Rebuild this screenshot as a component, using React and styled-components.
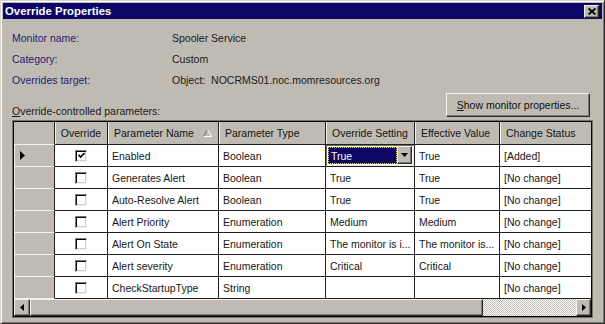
import React from 'react';
import styled, { createGlobalStyle } from 'styled-components';

const FACE = '#bfbbb3';
const NAVY = '#0c0666';
const LINE = '#1f1f1f';
const FONT = `"Liberation Sans", Arial, Helvetica, sans-serif`;

const Global = createGlobalStyle`
  html, body { margin: 0; padding: 0; background: ${FACE}; }
  body { font-family: ${FONT}; font-size: 10.5px; overflow: hidden; color: #161616; }
  * { box-sizing: border-box; }
`;

const Dialog = styled.div`
  width: 605px;
  height: 324px;
  background: ${FACE};
  border: 1px solid;
  border-color: #d8d4cc #2e2e2e #2e2e2e #d8d4cc;
  box-shadow: inset 1px 1px 0 #ffffff, inset -1px -1px 0 #7a766f;
  padding: 2px;
  display: flex;
  flex-direction: column;
`;

const TitleBar = styled.div`
  height: 16px;
  background: ${NAVY};
  display: flex;
  align-items: center;
  justify-content: space-between;
  padding: 0 3px 0 2px;
`;

const Title = styled.span`
  color: #fff;
  font-weight: bold;
  font-size: 11.3px;
  letter-spacing: 0.05px;
`;

const RaisedBtn = styled.div`
  background: ${FACE};
  border: 1px solid;
  border-color: #f4f2ee #2a2a2a #2a2a2a #f4f2ee;
  box-shadow: inset -1px -1px 0 #7e7a73;
  display: flex;
  align-items: center;
  justify-content: center;
`;

const CloseBtn = styled(RaisedBtn)`
  width: 15px;
  height: 13px;
`;

const Content = styled.div`
  flex: 1;
  display: flex;
  flex-direction: column;
  padding: 8px 9px 0 9px;
`;

const Info = styled.div`
  display: grid;
  grid-template-columns: 160px 1fr;
  grid-auto-rows: 21px;
  align-items: center;
`;

const Label = styled.span`
  color: #1d1d78;
`;

const Value = styled.span`
  color: #1a1a1a;
  white-space: pre;
`;

const ParamBar = styled.div`
  margin-top: 3px;
  display: flex;
  justify-content: space-between;
  align-items: flex-end;
`;

const ParamLabel = styled.span`
  line-height: 14px;
  margin-bottom: -1px;
  color: #1a1a1a;
`;

const PushButton = styled(RaisedBtn)`
  width: 144px;
  height: 24px;
  margin-right: 3px;
  color: #111;
`;

const U = styled.span`
  text-decoration: underline;
`;

const GridFrame = styled.div`
  margin-top: 3px;
  height: 198px;
  border: 1px solid #77736c;
  box-shadow: inset 0 0 0 1px #060606;
  padding: 1px;
  display: flex;
  flex-direction: column;
`;

const TableArea = styled.div`
  flex: 1;
  overflow: hidden;
  background: ${FACE};
`;

const Row = styled.div`
  display: grid;
  grid-template-columns: 41px 53px 111px 107px 89px 85px 120px;
  height: ${p => p.$h}px;
`;

const HeadCell = styled.div`
  background: ${FACE};
  border-right: 1px solid ${LINE};
  border-bottom: 1px solid ${LINE};
  box-shadow: inset 1px 0 0 #f4f2ee;
  display: flex;
  align-items: center;
  justify-content: ${p => (p.$center ? 'center' : 'space-between')};
  padding: ${p => (p.$center ? '0' : '0 6px 0 6px')};
  white-space: nowrap;
  overflow: hidden;
  color: #141414;
`;

const Corner = styled.div`
  background: ${FACE};
  border-right: 1px solid ${LINE};
  border-bottom: 1px solid #f4f2ee;
`;

const RowHead = styled.div`
  background: ${FACE};
  border-right: 1px solid ${LINE};
  border-bottom: 1px solid #f4f2ee;
  box-shadow: inset 1px 0 0 #f4f2ee;
  display: flex;
  align-items: center;
  padding-left: 6px;
`;

const Cell = styled.div`
  background: #fff;
  border-right: 1px solid ${LINE};
  border-bottom: 1px solid ${LINE};
  display: flex;
  align-items: center;
  justify-content: ${p => (p.$center ? 'center' : 'flex-start')};
  padding-left: ${p => (p.$center ? '0' : '4px')};
  white-space: nowrap;
  overflow: hidden;
  color: #161616;
`;

const Check = styled.span`
  width: 12px;
  height: 12px;
  background: #fff;
  border: 1px solid;
  border-color: #7e7a73 #f4f2ee #f4f2ee #7e7a73;
  box-shadow: inset 1px 1px 0 #0a0a0a, inset -1px -1px 0 #d4d0c8;
  display: flex;
  align-items: center;
  justify-content: center;
`;

const ComboCell = styled.div`
  background: #fff;
  border-right: 1px solid ${LINE};
  border-bottom: 1px solid ${LINE};
  display: flex;
`;

const Combo = styled.div`
  flex: 1;
  display: flex;
  border: 1px solid;
  border-color: #6f6b65 #ece9e3 #ece9e3 #6f6b65;
  padding: 1px;
`;

const ComboEdit = styled.div`
  flex: 1;
  background: ${NAVY};
  border: 1px dotted #f2dc3a;
  color: #fff;
  display: flex;
  align-items: center;
  padding-left: 2px;
`;

const ComboBtn = styled(RaisedBtn)`
  width: 15px;
  margin-top: -1px;
`;

const ScrollBar = styled.div`
  height: 17px;
  display: flex;
`;

const ScrollBtn = styled(RaisedBtn)`
  width: ${p => p.$w}px;
`;

const Thumb = styled(RaisedBtn)`
  width: 453px;
`;

const Track = styled.div`
  flex: 1;
  background: repeating-conic-gradient(#ffffff 0 25%, ${FACE} 0 50%) 0 0 / 2px 2px;
`;

const Svg = styled.svg`
  display: block;
  overflow: visible;
`;

const CloseX = () => (
  <Svg width="8" height="7" viewBox="0 0 8 7">
    <path d="M0.5 0.5 L7.5 6.5 M7.5 0.5 L0.5 6.5" stroke="#000" strokeWidth="1.7" />
  </Svg>
);

const CheckMark = () => (
  <Svg width="7" height="7" viewBox="0 0 7 7">
    <path d="M0.5 2.8 L2.6 5 L6.6 1" stroke="#000" strokeWidth="1.6" fill="none" />
  </Svg>
);

const SortUp = () => (
  <Svg width="9" height="8" viewBox="0 0 9 8">
    <path d="M4.5 0.5 L0.5 7.5" stroke="#6e6a63" strokeWidth="1" />
    <path d="M4.5 0.5 L8.5 7.5 L0.5 7.5" stroke="#ffffff" strokeWidth="1" fill="none" />
  </Svg>
);

const RowArrow = () => (
  <Svg width="5" height="9" viewBox="0 0 5 9">
    <path d="M0 0 L5 4.5 L0 9 Z" fill="#000" />
  </Svg>
);

const DownArrow = () => (
  <Svg width="7" height="4" viewBox="0 0 7 4">
    <path d="M0 0 L7 0 L3.5 4 Z" fill="#000" />
  </Svg>
);

const LeftArrow = () => (
  <Svg width="4" height="7" viewBox="0 0 4 7">
    <path d="M4 0 L4 7 L0 3.5 Z" fill="#000" />
  </Svg>
);

const RightArrow = () => (
  <Svg width="4" height="7" viewBox="0 0 4 7">
    <path d="M0 0 L0 7 L4 3.5 Z" fill="#000" />
  </Svg>
);

const rows = [
  { checked: true, name: 'Enabled', type: 'Boolean', setting: 'True', effective: 'True', status: '[Added]', current: true },
  { name: 'Generates Alert', type: 'Boolean', setting: 'True', effective: 'True', status: '[No change]' },
  { name: 'Auto-Resolve Alert', type: 'Boolean', setting: 'True', effective: 'True', status: '[No change]' },
  { name: 'Alert Priority', type: 'Enumeration', setting: 'Medium', effective: 'Medium', status: '[No change]' },
  { name: 'Alert On State', type: 'Enumeration', setting: 'The monitor is i...', effective: 'The monitor is...', status: '[No change]' },
  { name: 'Alert severity', type: 'Enumeration', setting: 'Critical', effective: 'Critical', status: '[No change]' },
  { name: 'CheckStartupType', type: 'String', setting: '', effective: '', status: '[No change]' },
];

export default function App() {
  return (
    <>
      <Global />
      <Dialog>
        <TitleBar>
          <Title>Override Properties</Title>
          <CloseBtn><CloseX /></CloseBtn>
        </TitleBar>
        <Content>
          <Info>
            <Label>Monitor name:</Label>
            <Value>Spooler Service</Value>
            <Label>Category:</Label>
            <Value>Custom</Value>
            <Label>Overrides target:</Label>
            <Value>{'Object:  NOCRMS01.noc.momresources.org'}</Value>
          </Info>
          <ParamBar>
            <ParamLabel><U>O</U>verride-controlled parameters:</ParamLabel>
            <PushButton><span><U>S</U>how monitor properties...</span></PushButton>
          </ParamBar>
          <GridFrame>
            <TableArea>
              <Row $h={23}>
                <Corner />
                <HeadCell $center>Override</HeadCell>
                <HeadCell>Parameter Name <SortUp /></HeadCell>
                <HeadCell>Parameter Type</HeadCell>
                <HeadCell>Override Setting</HeadCell>
                <HeadCell>Effective Value</HeadCell>
                <HeadCell>Change Status</HeadCell>
              </Row>
              {rows.map(r => (
                <Row $h={22} key={r.name}>
                  <RowHead>{r.current && <RowArrow />}</RowHead>
                  <Cell $center>
                    <Check>{r.checked && <CheckMark />}</Check>
                  </Cell>
                  <Cell>{r.name}</Cell>
                  <Cell>{r.type}</Cell>
                  {r.current ? (
                    <ComboCell>
                      <Combo>
                        <ComboEdit>{r.setting}</ComboEdit>
                        <ComboBtn><DownArrow /></ComboBtn>
                      </Combo>
                    </ComboCell>
                  ) : (
                    <Cell>{r.setting}</Cell>
                  )}
                  <Cell>{r.effective}</Cell>
                  <Cell>{r.status}</Cell>
                </Row>
              ))}
            </TableArea>
            <ScrollBar>
              <ScrollBtn $w={16}><LeftArrow /></ScrollBtn>
              <Thumb />
              <Track />
              <ScrollBtn $w={15}><RightArrow /></ScrollBtn>
            </ScrollBar>
          </GridFrame>
        </Content>
      </Dialog>
    </>
  );
}
